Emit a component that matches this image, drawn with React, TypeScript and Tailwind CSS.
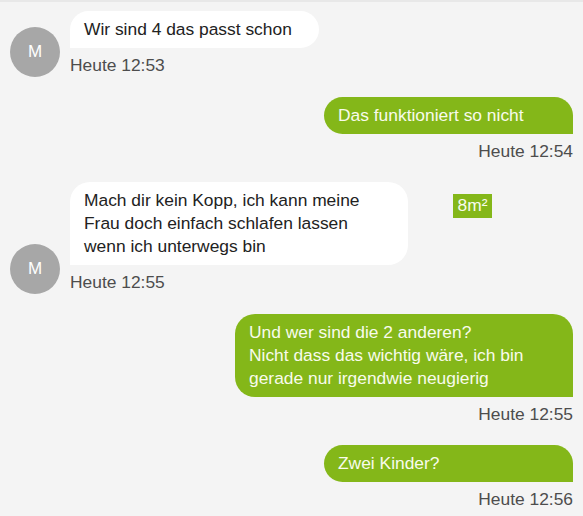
import React from "react";

const font = { fontFamily: '"Liberation Sans", Arial, sans-serif' };

function Received({ text, time, wide }: { text: React.ReactNode; time: string; wide?: boolean }) {
  return (
    <div className="flex items-end gap-[10px]">
      <div className="w-[50px] h-[50px] rounded-full bg-[#a7a7a7] flex items-center justify-center text-white text-[17px] shrink-0">
        M
      </div>
      <div className="flex flex-col items-start">
        <div
          className={
            wide
              ? "bg-white text-[#222] rounded-[20px] rounded-bl-none px-[14px] py-[7px] w-[338px] leading-[23px]"
              : "bg-white text-[#222] rounded-[20px] rounded-bl-none px-[14px] py-[7px] min-w-[249px] max-w-[338px] leading-[23px]"
          }
        >
          {text}
        </div>
        <div className="mt-[6px] text-[#4d4d4d] leading-[22.6px]">{time}</div>
      </div>
    </div>
  );
}

function Sent({ text, time, wide }: { text: React.ReactNode; time: string; wide?: boolean }) {
  return (
    <div className="flex flex-col items-end">
      <div
        className={
          wide
            ? "bg-[#84b719] text-[#f8fbec] rounded-[20px] rounded-br-none px-[14px] py-[7px] w-[338px] leading-[23px]"
            : "bg-[#84b719] text-[#f8fbec] rounded-[20px] rounded-br-none px-[14px] py-[7px] min-w-[249px] max-w-[338px] leading-[23px]"
        }
      >
        {text}
      </div>
      <div className="mt-[6px] text-[#4d4d4d] leading-[22.6px]">{time}</div>
    </div>
  );
}

export default function App() {
  return (
    <div
      className="relative w-[583px] h-[516px] overflow-hidden bg-[#f4f4f4] border-t-2 border-[#e8e8e8] text-[17.4px]"
      style={font}
    >
      <div className="flex flex-col gap-[20px] pl-[10px] pr-[10px] pt-[9px]">
        <Received text="Wir sind 4 das passt schon" time="Heute 12:53" />
        <Sent text="Das funktioniert so nicht" time="Heute 12:54" />
        <Received
          wide
          text={
            <>
              Mach dir kein Kopp, ich kann meine
              <br />
              Frau doch einfach schlafen lassen
              <br />
              wenn ich unterwegs bin
            </>
          }
          time="Heute 12:55"
        />
        <Sent
          wide
          text={
            <>
              Und wer sind die 2 anderen?
              <br />
              Nicht dass das wichtig wäre, ich bin
              <br />
              gerade nur irgendwie neugierig
            </>
          }
          time="Heute 12:55"
        />
        <Sent text="Zwei Kinder?" time="Heute 12:56" />
      </div>
      <div className="absolute left-[453px] top-[192px] w-[39px] h-[24px] bg-[#84b719] text-[#f8fbec] flex items-center justify-center leading-none">
        8m²
      </div>
    </div>
  );
}
